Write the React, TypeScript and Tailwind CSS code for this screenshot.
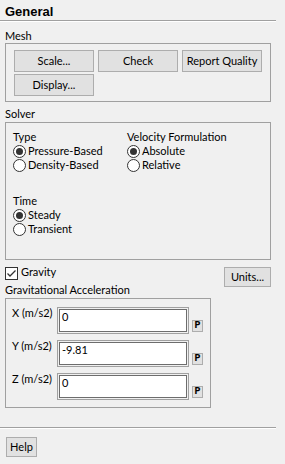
const Btn = ({ label, className = "" }: { label: string; className?: string }) => (
  <div
    className={`flex items-center justify-center bg-[#e1e1e1] border border-[#adadad] text-black ${className}`}
  >
    {label}
  </div>
);

const Radio = ({ label, checked }: { label: string; checked?: boolean }) => (
  <div className="flex items-center h-[14px]">
    <div className="w-[13px] h-[13px] rounded-full border border-[#333] bg-white flex items-center justify-center">
      {checked && <div className="w-[7px] h-[7px] rounded-full bg-[#333]" />}
    </div>
    <span className="ml-[2px]">{label}</span>
  </div>
);

const Group = ({ title, children }: { title: string; children: React.ReactNode }) => (
  <div>
    <div className="h-[15px] pl-[5px]">{title}</div>
    {children}
  </div>
);

const VectorRow = ({ axis, value }: { axis: string; value: string }) => (
  <div className="flex items-start h-[27px]">
    <div className="w-[45px] -mt-[1px]">{axis} (m/s2)</div>
    <div className="w-[132px] h-[27px] border border-[#a0a0a0] p-[1px] bg-[#f0f0f0]">
      <div className="w-full h-full border border-[#6d6d6d] bg-white pl-[2px] pt-[1px] leading-[12px]">
        {value}
      </div>
    </div>
    <div className="ml-[3px] mt-[13px] w-[11px] h-[12px] bg-[#e1e1e1] border border-[#adadad] flex items-center justify-center text-[10px] font-bold font-['Liberation_Mono'] leading-[10px]">
      P
    </div>
  </div>
);

export default function App() {
  return (
    <div className="w-[285px] h-[464px] bg-[#f0f0f0] text-black font-['Lato',sans-serif] text-[11px] leading-[14px] flex flex-col overflow-hidden">
      <div className="w-[276px] h-[21px] pt-[4px] pl-[5px] border-b border-[#a0a0a0] shadow-[0_1px_0_#ffffff]">
        <span className="font-['Liberation_Sans',sans-serif] font-bold text-[13px] leading-[15px]">General</span>
      </div>

      <div className="mt-[8px]">
        <div className="h-[14px] pl-[5px]">Mesh</div>
        <div className="ml-[5px] w-[266px] h-[59px] border border-[#a0a0a0] pt-[6px] pl-[8px]">
          <div className="grid grid-cols-[80px_80px_80px] gap-x-[4px] gap-y-[2px]">
            <Btn label="Scale..." className="h-[22px]" />
            <Btn label="Check" className="h-[22px]" />
            <Btn label="Report Quality" className="h-[22px]" />
            <Btn label="Display..." className="h-[22px]" />
          </div>
        </div>
      </div>

      <div className="mt-[5px]">
        <Group title="Solver">
          <div className="ml-[5px] w-[266px] h-[138px] border border-[#a0a0a0] pt-[7px] pl-[7px]">
            <div className="flex">
              <div className="w-[114px]">
                <div>Type</div>
                <Radio label="Pressure-Based" checked />
                <Radio label="Density-Based" />
              </div>
              <div>
                <div>Velocity Formulation</div>
                <Radio label="Absolute" checked />
                <Radio label="Relative" />
              </div>
            </div>
            <div className="mt-[22px]">
              <div>Time</div>
              <Radio label="Steady" checked />
              <Radio label="Transient" />
            </div>
          </div>
        </Group>
      </div>

      <div className="mt-[5px] flex">
        <div>
          <div className="flex items-start h-[18px] pl-[5px]">
            <div className="mt-[2px] w-[13px] h-[13px] border border-[#333] bg-white flex items-center justify-center">
              <svg width="11" height="11" viewBox="0 0 11 11">
                <path d="M1.5 5.5 L4 8 L9.5 2.5" fill="none" stroke="#333" strokeWidth="1.3" />
              </svg>
            </div>
            <span className="ml-[3px]">Gravity</span>
          </div>
          <Group title="Gravitational Acceleration">
            <div className="ml-[5px] w-[206px] h-[110px] border border-[#a0a0a0] pt-[8px] pl-[6px] flex flex-col gap-[6px]">
              <VectorRow axis="X" value="0" />
              <VectorRow axis="Y" value="-9.81" />
              <VectorRow axis="Z" value="0" />
            </div>
          </Group>
        </div>
        <div className="ml-[13px] mt-[2px]">
          <Btn label="Units..." className="w-[47px] h-[20px]" />
        </div>
      </div>

      <div className="mt-[19px] w-[276px] border-t border-[#a0a0a0] shadow-[0_1px_0_#ffffff]" />

      <div className="mt-[9px] ml-[6px]">
        <Btn label="Help" className="w-[31px] h-[20px]" />
      </div>
    </div>
  );
}
